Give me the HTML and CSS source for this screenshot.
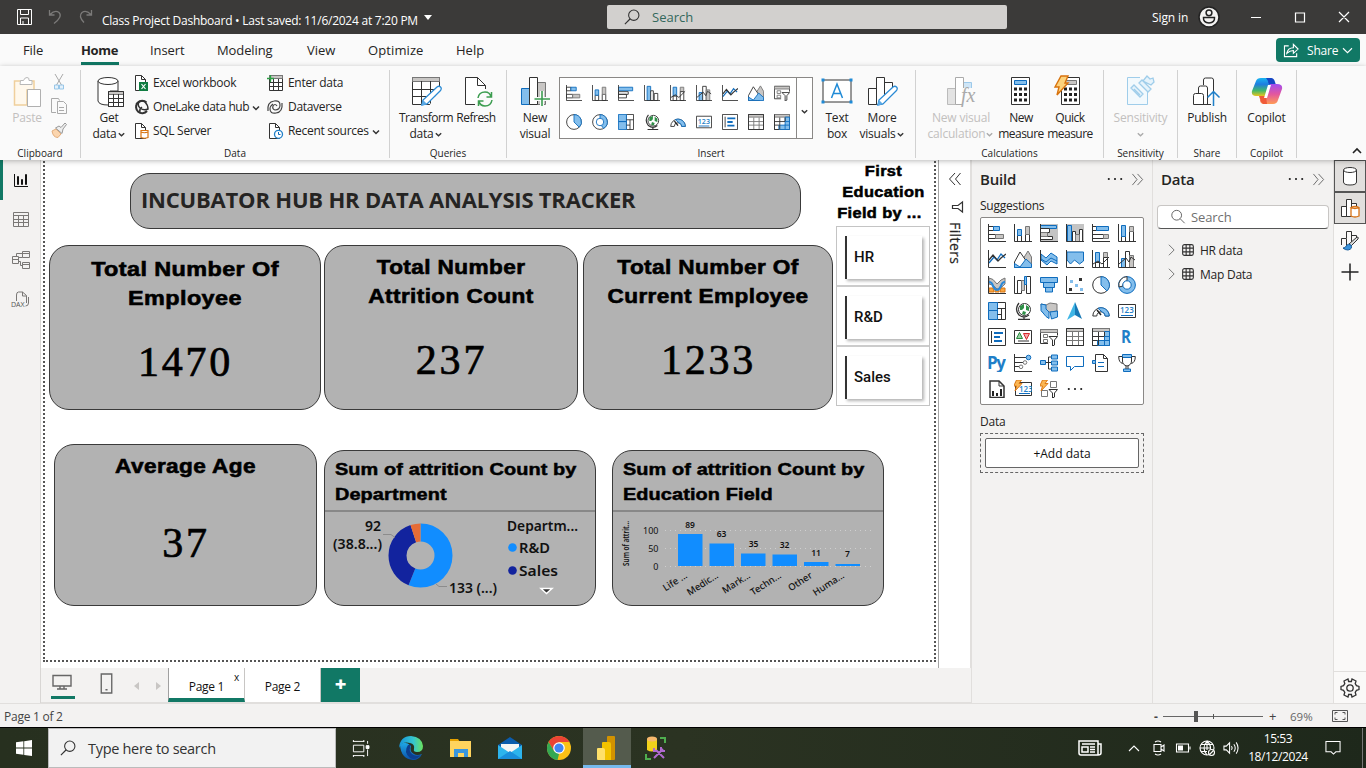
FILE: index.html
```html
<!DOCTYPE html>
<html lang="en">
<head>
<meta charset="utf-8">
<title>Class Project Dashboard</title>
<link rel="stylesheet" href="styles.css">
</head>
<body>
<svg class="defs" aria-hidden="true">
<defs>
<linearGradient id="cpA" x1="0" y1="0" x2="0" y2="1"><stop offset="0" stop-color="#18b5f0"/><stop offset=".35" stop-color="#1f7de0"/><stop offset=".7" stop-color="#42b86a"/><stop offset="1" stop-color="#e8c41c"/></linearGradient>
<linearGradient id="cpB" x1="0" y1="0" x2="0" y2="1"><stop offset="0" stop-color="#a24df0"/><stop offset=".5" stop-color="#e2569f"/><stop offset="1" stop-color="#ff9b54"/></linearGradient>
<linearGradient id="edA" x1="0" y1="0" x2="1" y2="0"><stop offset="0" stop-color="#1593dc"/><stop offset=".6" stop-color="#36c6cf"/><stop offset="1" stop-color="#6be35c"/></linearGradient>
<linearGradient id="edB" x1="0" y1="0" x2="0" y2="1"><stop offset="0" stop-color="#1fa8e6"/><stop offset="1" stop-color="#0b4fa8"/></linearGradient>
<symbol id="sbar" viewBox="0 0 18 18"><path class="w" d="M.5 2.500h5v4h-5zM.5 10.500h7v4h-7z"/><path class="b" d="M5.500 2.500h6v4h-6z"/><path class="g" d="M7.500 10.500h8v4h-8z"/><path class="d" d="M.5 0v17.500H18"/></symbol>
<symbol id="scol" viewBox="0 0 18 18"><path class="w" d="M3.500 11.500h4v6h-4zM11.500 10.500h4v7h-4z"/><path class="b" d="M3.500 5.500h4v6h-4z"/><path class="g" d="M11.500 2.500h4v8h-4z"/><path class="d" d="M.5 0v17.500H18"/></symbol>
<symbol id="cbar" viewBox="0 0 18 18"><path class="b" d="M.5 2.500h16v4h-16z"/><path class="w" d="M.5 7.500h11v3h-11zM.5 10.500h9v4h-9z"/><path class="d" d="M.5 0v17.500H18"/></symbol>
<symbol id="ccol" viewBox="0 0 18 18"><path class="b" d="M3.500 1.500h4v16h-4z"/><path class="w" d="M7.500 6.500h3v11h-3zM11.500 9.500h4v8h-4z"/><path class="d" d="M.5 0v17.500H18"/></symbol>
<symbol id="hbar" viewBox="0 0 18 18"><path class="w" d="M.5 2.500h4v4h-4zM.5 10.500h11v4h-11z"/><path class="b" d="M4.500 2.500h12v4h-12z"/><path class="g" d="M11.500 10.500h5v4h-5z"/><path class="d" d="M.5 0v17.500H18"/></symbol>
<symbol id="hcol" viewBox="0 0 18 18"><path class="w" d="M3.500 12.500h4v5h-4zM11.500 7.500h4v10h-4z"/><path class="b" d="M3.500 1.500h4v11h-4z"/><path class="g" d="M11.500 2.500h4v5h-4z"/><path class="d" d="M.5 0v17.500H18"/></symbol>
<symbol id="cbars" viewBox="0 0 18 18"><path fill="#c4c4c4" d="M0 0h18v18H0z"/><path class="b" d="M.5 1.500h16v3h-16z"/><path class="w" d="M.5 4.500h9v4h-9zM.5 12.500h12v3h-12z"/><path class="g" d="M.5 8.500h7v4h-7z"/><path class="d" d="M.5 0v17.500H18"/></symbol>
<symbol id="ccols" viewBox="0 0 18 18"><path fill="#c4c4c4" d="M0 0h18v18H0z"/><path class="b" d="M1.500 1.500h4v16h-4z"/><path class="w" d="M6.500 7.500h3v10h-3zM13.500 5.500h3v12h-3z"/><path class="g" d="M9.500 10.500h4v7h-4z"/><path class="d" d="M.5 0v17.500H18"/></symbol>
<symbol id="line" viewBox="0 0 18 18"><path class="bl" stroke-width="1.300" d="M1 13l5-6 3 3 4-6 4 4"/><path class="d" stroke-width="1.300" d="M1 10l4-5 5 6 3-3 5-4"/><path class="d" d="M.5 0v17.500H18"/></symbol>
<symbol id="area" viewBox="0 0 18 18"><path class="g" d="M9 9L14 1l3.500 6v10z"/><path class="w" d="M.5 12L6 2l9 13-2 2.500H.5z"/><path class="b" d="M.5 17.500v-4L6 17l6-8 5.500 5v3.500z"/></symbol>
<symbol id="sarea" viewBox="0 0 18 18"><path class="b" d="M1 4l5 4 5-5 6 4v7l-6-3-4 4-6-5z"/><path class="bl" d="M1 9l5 3 5-4 6 3"/><path class="d" d="M.5 0v17.500H18"/></symbol>
<symbol id="sarea2" viewBox="0 0 18 18"><path class="b" d="M1 2h16.500v9l-4 3-5-4-4 4-3.500-4z"/><path class="d" d="M.5 0v17.500H18"/></symbol>
<symbol id="linecol" viewBox="0 0 18 18"><path class="b" d="M3.500 2.500h4v10h-4z"/><path class="g" d="M11.500 2.500h4v5h-4z"/><path class="w" d="M3.500 12.500h4v5h-4zM11.500 7.500h4v10h-4z"/><path class="d" d="M1 14l5-3 4 3 7-7M.5 0v17.500H18"/></symbol>
<symbol id="linecol2" viewBox="0 0 18 18"><path class="b" d="M3.500 8.500h4v9h-4z"/><path class="w" d="M7.500 1.500h4v16h-4z"/><path class="g" d="M11.500 5.500h4v12h-4z"/><path class="d" d="M1 14l7-6 3 4 2-5 4 3M.5 0v17.500H18"/></symbol>
<symbol id="ribbonc" viewBox="0 0 18 18"><path class="g" d="M1 2q4 0 8 6 4-5 8-6v6q-4 5-8 5-4-5-8-5z"/><path fill="#f7a643" stroke="#d87511" d="M1 12h4l1 4H1zM13 12h4v4h-5zM7 13.500h4V16H7z"/><path fill="none" stroke="#2b88d8" stroke-width="2.200" d="M1 6q3 0 4 4 2 4 4 4t4-4q1-4 4-4"/><path class="d" d="M.5 0v17.500H18"/></symbol>
<symbol id="water" viewBox="0 0 18 18"><path class="w" d="M3.500 4.500h4v13h-4zM12.500.500h4v17h-4z"/><path class="g" d="M7.500 4.500h3v10h-3z"/><path class="b" d="M10.500.500h2v8h-2z"/><path class="d" d="M.5 0v17.500H4"/></symbol>
<symbol id="funnel" viewBox="0 0 18 18"><path class="b" d="M.5 1.500h17v5H.5zM3.500 6.500h11v5h-11zM5.500 11.500h7v4.500h-7z"/></symbol>
<symbol id="scatter" viewBox="0 0 18 18"><path fill="#83beec" d="M4 4h3v3H4zM9 8h3v3H9zM14 12h3v3h-3z"/><path fill="#333" d="M13 2h3v3h-3zM3 12h3v3H3z"/><path class="d" d="M.5 0v17.500H18"/></symbol>
<symbol id="pie" viewBox="0 0 18 18"><circle class="w" cx="9" cy="9" r="8.300"/><path class="b" d="M9 .7a8.300 8.300 0 0 1 5.900 14.200L9 9z"/></symbol>
<symbol id="donut" viewBox="0 0 18 18"><circle class="b" cx="9" cy="9" r="8.400"/><path class="w" d="M9 .6A8.400 8.400 0 0 0 1 11l4-1q-.5-4 4-5.300z"/><circle class="bw" cx="9" cy="9" r="4.200"/></symbol>
<symbol id="donut2" viewBox="0 0 18 18"><circle class="w" cx="9" cy="9" r="8.300"/><path class="b" d="M9 .7a8.300 8.300 0 0 1 4 15.500L9 11z"/><circle class="bw" cx="9" cy="9" r="4.200"/></symbol>
<symbol id="tree" viewBox="0 0 18 18"><path class="w" d="M9.500.5h8v17h-8z"/><path class="b" d="M.5.500h9v8h-9zM.5 8.500h9v9h-9z"/><path class="d" d="M9.500 6.500h8M13.500 6.500v11M9.500 12.500h4"/></symbol>
<symbol id="globe" viewBox="0 0 18 18"><circle fill="#fff" stroke="#333" cx="10.500" cy="7.500" r="6"/><path fill="#2f8f47" d="M6 4l4-2v4l-2 2H6zM12 3l3 2v4l-3-1zM9 9l3 1-1 3-3-1z"/><path fill="none" stroke="#333" stroke-width="1.300" d="M5 1Q0 7 5 13q5 4 10 0M10 15v2.500M4 17.500h12"/></symbol>
<symbol id="fmap" viewBox="0 0 18 18"><path class="g" d="M1 2l5 1 4-2 7 1v7l-7 1-4-1-4 1z"/><path class="b" d="M1 2l5 1v4l3 3v6.500l-3-2-5-6zM10 10l7.500-1v6l-6 2z"/></symbol>
<symbol id="arrow" viewBox="0 0 18 18"><path fill="#3fb5e5" d="M9 0L1 18l8-5z"/><path fill="#1778b5" d="M9 0l7 17-7-4z"/></symbol>
<symbol id="gauge" viewBox="0 0 18 18"><path class="w" d="M.8 14a8.200 8.200 0 0 1 16.400 0h-4a4.200 4.200 0 0 0-8.400 0z"/><path class="b" d="M6 6.300A8.200 8.200 0 0 1 17.200 14h-4q0-3-3-4z"/><path stroke="#222" stroke-width="1.500" d="M9 13l-4-5"/></symbol>
<symbol id="card" viewBox="0 0 18 18"><path class="w" d="M.5 2.500h17v13H.5z"/><text class="num" x="2" y="11">123</text><path class="bl" d="M3 13.500h12"/></symbol>
<symbol id="mcard" viewBox="0 0 18 18"><path class="w" d="M.5.500h17v17H.5z"/><path class="d" d="M3.500 3v12"/><path stroke="#0f6cbd" stroke-width="2" d="M6 5h9M6 9h6M6 13h8"/></symbol>
<symbol id="kpi" viewBox="0 0 18 18"><path class="w" d="M.5 2.500h17v13H.5z"/><path fill="#9bd0a4" stroke="#29893f" d="M2.500 10.500l3-6 3 6z"/><path fill="#f4a6a6" stroke="#d4282c" d="M9.500 5.500h6l-3 6z"/><path class="d" d="M4 13h11"/></symbol>
<symbol id="slicer" viewBox="0 0 18 18"><path class="d" d="M8 15.500H.5v-14h17v6"/><path class="g" d="M.5 1.500h17v3H.5z"/><path class="gw" d="M3.500 6.500h4v3h-4zM3.500 11.500h4v3h-4z"/><path class="w" d="M9 8.500h8.500L14.500 12v5l-2 1v-6z"/></symbol>
<symbol id="table" viewBox="0 0 18 18"><path class="w" d="M.5.500h17v17H.5z"/><path class="g" d="M.5.500h17v3H.5z"/><path class="gw" d="M6.500 4v13M12.500 4v13M1 8.500h16M1 12.500h16"/><path class="d" d="M.5.500h17v17H.5z"/></symbol>
<symbol id="matrix" viewBox="0 0 18 18"><path class="w" d="M.5.500h17v17H.5z"/><path class="g" d="M.5.500h17v3H.5z"/><path class="b" d="M12.500 3.500h5v14h-12v-5h7z"/><path class="d" d="M.5 8.500h12M.5 12.500h5M6.500 4v13M12.500 4v4M.5.500v17h5"/><path class="bl" d="M12.500 8.500h5M12.500 12.500h5M12.500 12v5"/></symbol>
<symbol id="r" viewBox="0 0 18 18"><text class="big" x="3" y="15" textLength="10" lengthAdjust="spacingAndGlyphs">R</text></symbol>
<symbol id="py" viewBox="0 0 18 18"><text class="big" x="-1" y="15" textLength="19">Py</text></symbol>
<symbol id="keyinf" viewBox="0 0 18 18"><path class="d" d="M.5 0v17.500H18M1 3.500h11M1 8.500h8M1 12.500h4"/><circle class="b" cx="14.500" cy="3.500" r="2.300"/><circle class="gw" cx="11" cy="8.500" r="1.800"/><circle class="gw" cx="7" cy="12.800" r="1.800"/></symbol>
<symbol id="decomp" viewBox="0 0 18 18"><path class="d" d="M5 8.500h7M8.500 3v12M8.500 3h3M8.500 15h3"/><path class="b" d="M.5 6.500h5v4h-5zM11.500 1h6v4h-6zM11.500 7h6v4h-6zM11.500 13h6v4h-6z"/></symbol>
<symbol id="qa" viewBox="0 0 18 18"><path class="bw" d="M.5 2.500h17v10h-9l-4 4v-4h-4z"/></symbol>
<symbol id="narr" viewBox="0 0 18 18"><path class="w" d="M3.500.500h8l4 4v13h-12z"/><path class="d" d="M11.500.500v4h4"/><path class="b" d="M.5 6.500h3v3h-3z"/><path class="bl" d="M6 8.500h6M6 12.500h6"/></symbol>
<symbol id="cup" viewBox="0 0 18 18"><path class="b" d="M4.500.500h9v3h-9zM5.500 15h7v2.500h-7z"/><path class="d" d="M4.500 3v4q0 4 4.500 5 4.500-1 4.500-5V3M4 2.500H.7q0 6 4 7M14 2.500h3.300q0 6-4 7M8 12v3M10 12v3"/></symbol>
<symbol id="pag" viewBox="0 0 18 18"><path fill="#fff" stroke="#333" stroke-width="1.500" d="M2 1h9l5 5v11.500H2z"/><path class="d" d="M11 1v5h5"/><path fill="#222" d="M4 11h2v5H4zM8 13h2v3H8zM12 9h2v7h-2z"/></symbol>
<symbol id="bolt" viewBox="0 0 10 12"><path fill="#fbb653" stroke="#d8720c" stroke-width=".9" d="M3.500.500h5L6 4h3L2 11.500l1.500-5H.7z"/></symbol>
<symbol id="app1" viewBox="0 0 18 18"><path class="w" d="M1.500 2.500h16v13h-16z"/><text class="num" x="5" y="12">123</text><path class="bl" d="M5 13.500h11"/><use href="#bolt" x="-1" y="-.5" width="10" height="12"/></symbol>
<symbol id="app2" viewBox="0 0 18 18"><path class="gw" d="M1.500 10.500h6v6h-6zM10.500 1.500h6v6h-6z"/><path class="w" d="M9 9.500h8.500l-3 3.500v4l-2 1v-5z"/><use href="#bolt" x="-1" y="-.5" width="10" height="12"/></symbol>
<symbol id="dots" viewBox="0 0 18 18"><path fill="#333" d="M1 8h2v2H1zM8 8h2v2H8zM15 8h2v2h-2z"/></symbol>
<symbol id="chev" viewBox="0 0 10 10"><path fill="none" stroke="currentColor" stroke-width="1.500" d="M2 3.500L5 6.500l3-3"/></symbol>
<symbol id="dbl" viewBox="0 0 14 14"><path fill="none" stroke="currentColor" d="M1.500 1l5 6-5 6M7 1l5.500 6L7 13"/></symbol>
<symbol id="pencil" viewBox="0 0 22 22"><path fill="#fff" stroke="#2a8ad4" stroke-width="1.300" d="M2 20l1-5L17 2q2-1.500 3.500 0t0 3.500L7 19z"/><path fill="#5aa9e6" d="M1 21l2-6 4 4z"/></symbol>
<symbol id="bars3" viewBox="0 0 30 30"><path class="w" d="M1.500 12.500h8v16h-8zM17.500 6.500h8v22h-8zM9.500 1.500h8v27h-8z"/></symbol>
<symbol id="search" viewBox="0 0 18 18"><circle cx="11" cy="7" r="5.800" fill="none" stroke="currentColor" stroke-width="1.200"/><path stroke="currentColor" stroke-width="1.300" d="M7 11L1 17"/></symbol>
</defs>
</svg>

<header class="titlebar">
  <svg class="save" viewBox="0 0 18 18"><path d="M1.500 1.500h14v15h-14zM4.500 1.500v5h8v-5M4.500 16v-6h8v6M7 16v-3"/></svg>
  <svg class="undo" viewBox="0 0 16 16"><path d="M1.500 1v5h5M2 5.500q5-5 9-2 4 4-5 11"/></svg>
  <svg class="undo redo" viewBox="0 0 16 16"><path d="M14.500 1v5h-5M14 5.500q-5-5-9-2-4 4 2 10"/></svg>
  <span class="doc">Class Project Dashboard • Last saved: 11/6/2024 at 7:20 PM</span>
  <i class="caret"></i>
  <div class="tsearch"><svg><use href="#search"/></svg><span>Search</span></div>
  <span class="signin">Sign in</span>
  <svg class="avatar" viewBox="0 0 20 20"><circle cx="10" cy="10" r="10" fill="#f3f2f1"/><circle cx="10" cy="5.800" r="2.900"/><path d="M4.500 10.500h11q.5 5-5.500 5.500-6-.5-5.500-5.500z"/></svg>
  <svg class="win" viewBox="0 0 100 12"><path d="M1 6.500h10M45.500 2h9v9h-9zM89 1l10 10M99 1L89 11"/></svg>
</header>

<nav class="menu">
  <span class="m1">File</span><span class="m2 on">Home</span><span class="m3">Insert</span><span class="m4">Modeling</span><span class="m5">View</span><span class="m6">Optimize</span><span class="m7">Help</span>
  <button class="share"><svg viewBox="0 0 18 16"><path d="M6 3H1.500v11.500h13V11M4 11q1-6 7-6V1.500l5 5-5 4.500V8q-4 0-7 3z"/></svg><span>Share</span><svg class="sc" viewBox="0 0 10 10"><path d="M0 2.500l5 5 5-5"/></svg></button>
</nav>

<section class="ribbon">
  <div class="group gClip"><div class="tools">
    <div class="big off"><svg viewBox="0 0 30 30"><path fill="#fff8ec" stroke="#f0cf9c" stroke-width="1.500" d="M9 5H2.500v24H15V14h7V5h-4"/><path fill="#fff" stroke="#b8b8b8" d="M8.500 4.500h3q1-3 3.500-3t2 3h3v4h-12z"/><path fill="#fff" stroke="#b0b0b0" d="M15.500 13.500h13v17h-13z"/></svg><b>Paste</b></div>
    <div class="stack mini"><svg viewBox="0 0 16 16"><path fill="none" stroke="#aaa" d="M4 0l6.500 11M12 0L5.500 11"/><path fill="#e4f1fb" stroke="#97c6e8" d="M3.500 11h4v4h-4zM8.500 11h4v4h-4z"/></svg><svg viewBox="0 0 16 16"><path fill="#fafafa" stroke="#aaa" d="M5 14.500H.5V.5h7l1 2M6.500 3.500h6l3 3v9h-9zM8 9.500h5M8 12.500h5"/></svg><svg viewBox="0 0 16 16"><path fill="#fbd5ae" stroke="#e3ad7c" d="M1 9l4-2 5 5-3 3.500q-5 0-6-6.500z"/><path fill="#eee" stroke="#999" d="M4.500 6L8 4l2 1.500L14 1l1.500 1.500L12 7l-1 4.500z"/></svg></div>
  </div><p>Clipboard</p></div>

  <div class="group gData"><div class="tools">
    <div class="big getd"><svg viewBox="0 0 30 30"><path class="w" d="M4 5v20q1 4 10 4h2V15h8V5"/><ellipse class="w" cx="14" cy="5" rx="10" ry="3.500"/><path class="w" d="M14.500 15.500h15v15h-15z"/><path class="g" d="M14.500 15.500h15v3h-15z"/><path class="d" d="M14.500 22.500h15M14.500 26.500h15M19.500 18v12M24.500 18v12M14.500 15.500h15v15h-15z"/></svg><b>Get</b><b>data<svg class="cv"><use href="#chev"/></svg></b></div>
    <div class="stack c1">
      <span><svg viewBox="0 0 16 16"><path class="w" d="M1.500.500h6l4 4v11h-10z"/><path class="d" d="M7.500.500v4h4"/><path fill="#107c41" d="M5 7h9v9H5z"/><path stroke="#fff" stroke-width="1.200" d="M7.500 9l4 5M11.500 9l-4 5"/></svg>Excel workbook</span>
      <span class="lake"><svg viewBox="0 0 16 16"><path fill="none" stroke="#333" stroke-width="2" d="M12.500 3.500A6.200 6.200 0 1 0 13 12"/><path fill="none" stroke="#333" stroke-width="1.500" d="M2 5q5-5 9-2 3 3 3 7-4 2-8-1-3-3-1-6M6 13q-1-3 2-5"/></svg>OneLake data hub<svg class="cv lg"><use href="#chev"/></svg></span>
      <span><svg viewBox="0 0 16 16"><path class="w" d="M1.500.500h6l4 4v11h-10z"/><path class="d" d="M7.500.500v4h4"/><path fill="#fff" stroke="#d9730d" stroke-width="1.200" d="M7 7.500h7v7q-3.500 1.500-7 0zM7 9q3.500 1.500 7 0"/></svg>SQL Server</span>
    </div>
    <div class="stack c2">
      <span><svg viewBox="0 0 16 16"><path class="w" d="M2.500.500h13v15h-13z"/><path class="g" d="M2.500.500h13v3h-13z"/><path class="d" d="M2 7.500h13.500M2 11.500h13.500M6.500 4v11.500M11.500 4v11.500"/><path stroke="#2c9f45" stroke-width="1.300" d="M3.500 0v7M0 3.500h7"/></svg>Enter data</span>
      <span><svg viewBox="0 0 16 16"><path fill="none" stroke="#444" stroke-width="1.200" d="M1 12q-1-9 6-10 6-1 6 4 0 5-5 5-3-1-2-4 2-3 4 0M15 4q1 9-6 10-6 1-6-4 0-3 3-5"/></svg>Dataverse</span>
      <span class="rec"><svg viewBox="0 0 16 16"><path class="w" d="M2.500.500h6l4 4v11h-10z"/><path class="d" d="M8.500.500v4h4"/><circle fill="#fff" stroke="#1f7fc8" stroke-width="1.300" cx="11.500" cy="11.300" r="4"/><path class="bl" d="M11.500 9v2.500h2"/></svg>Recent sources<svg class="cv lg"><use href="#chev"/></svg></span>
    </div>
  </div><p>Data</p></div>

  <div class="group gQuery"><div class="tools">
    <div class="big wT"><svg viewBox="0 0 30 30"><path class="w" d="M1.500 1.500h27v27h-27z"/><path class="g" d="M1.500 1.500h27v4h-27z"/><path class="d" d="M1.500 13.500h27M1.500 20.500h27M10.500 5v23M19.500 5v23"/><path fill="#fafafa" d="M18 30h12V11z"/><use href="#pencil" x="9" y="9" width="22" height="22"/></svg><b>Transform</b><b>data<svg class="cv"><use href="#chev"/></svg></b></div>
    <div class="big wR"><svg viewBox="0 0 30 30"><path class="w" d="M14 28.500H4.500v-27h12l8 8V13"/><path class="d" d="M16.500 1.500v8h8"/><path fill="none" stroke="#3c9d50" stroke-width="1.500" d="M17 22q1-6 7-6 5 0 6 5M30.500 16v5h-5M31 24q-1 6-7 6-5 0-6-5M17.500 30v-5h5"/></svg><b>Refresh</b></div>
  </div><p>Queries</p></div>

  <div class="group gInsert"><div class="tools">
    <div class="big wN"><svg viewBox="0 0 30 30"><path class="b" d="M1.500 12.500h8v16h-8z"/><path fill="#c8c6c4" stroke="#777" d="M17.500 6.500h8v22h-8z"/><path class="w" d="M9.500 1.500h8v27h-8z"/><path stroke="#fafafa" stroke-width="4" d="M22 15v16M14 23h16"/><path stroke="#3c9d50" stroke-width="1.600" d="M22 15v15M14.500 23H30"/></svg><b>New</b><b>visual</b></div>
    <div class="gallery"><div class="gal">
      <svg><use href="#sbar"/></svg><svg><use href="#scol"/></svg><svg><use href="#cbar"/></svg><svg><use href="#ccol"/></svg><svg><use href="#linecol"/></svg><svg><use href="#linecol2"/></svg><svg><use href="#line"/></svg><svg><use href="#area"/></svg><svg><use href="#slicer"/></svg>
      <svg><use href="#pie"/></svg><svg><use href="#donut2"/></svg><svg><use href="#tree"/></svg><svg><use href="#globe"/></svg><svg><use href="#gauge"/></svg><svg><use href="#card"/></svg><svg><use href="#mcard"/></svg><svg><use href="#table"/></svg><svg><use href="#matrix"/></svg>
    </div><div class="more"><svg class="cv"><use href="#chev"/></svg></div></div>
    <div class="big wB"><svg viewBox="0 0 30 30"><path class="w" d="M1 4h28v22H1z"/><path fill="#1f8ad6" d="M-.5 2.500h3v3h-3zM27.500 2.500h3v3h-3zM-.5 24.500h3v3h-3zM27.500 24.500h3v3h-3z"/><path fill="none" stroke="#1f8ad6" stroke-width="1.500" d="M9.500 22L15 8l5.500 14M11.500 17.500h7"/></svg><b>Text</b><b>box</b></div>
    <div class="big wM"><svg viewBox="0 0 30 30"><use href="#bars3"/><path fill="#fafafa" d="M14 30h14V12z"/><use href="#pencil" x="9" y="9" width="22" height="22"/></svg><b>More</b><b>visuals<svg class="cv"><use href="#chev"/></svg></b></div>
  </div><p>Insert</p></div>

  <div class="group gCalc"><div class="tools">
    <div class="big off wV"><svg viewBox="0 0 30 30"><path fill="#e3e3e3" stroke="#bbb" d="M1.500 12.500h8v16h-8z"/><path fill="#cfe6f7" stroke="#9cc9ea" d="M17.500 6.500h8v6h-8z"/><path fill="#fff" stroke="#aaa" d="M9.500 1.500h8v27h-8z"/><path fill="#fafafa" d="M16 12h14v18H16z"/><text class="fx" x="15" y="26">fx</text></svg><b>New visual</b><b>calculation<svg class="cv"><use href="#chev"/></svg></b></div>
    <div class="big wE"><svg viewBox="0 0 30 30"><path class="w" d="M5.500 1.500h18v27h-18z"/><path class="b" d="M8.500 4.500h12v4h-12z"/><path stroke="#222" stroke-width="3" stroke-dasharray="3 2" d="M8 13h13M8 18.500h13M8 24h13"/></svg><b>New</b><b>measure</b></div>
    <div class="big wQ"><svg viewBox="0 0 30 30"><path class="w" d="M6.500 1.500h18v27h-18z"/><path class="g" d="M9.500 4.500h12v4h-12z"/><path stroke="#222" stroke-width="3" stroke-dasharray="3 2" d="M9 13h13M9 18.500h13M9 24h13"/><path fill="#fcd27c" stroke="#d8720c" stroke-width="1.400" d="M6 0h7l-3 7h3L2 19l2-8H0z"/></svg><b>Quick</b><b>measure</b></div>
  </div><p>Calculations</p></div>

  <div class="group gSens"><div class="tools"><div class="big off"><svg viewBox="0 0 30 30"><path fill="#f2f9fd" stroke="#9fcdea" d="M15 1.500H2.500v27h20V15"/><path fill="#e6f3fb" stroke="#9fcdea" stroke-width="1.300" d="M6 12l3-3 9 9-3 3zM9 13l6 6M14 7l3-3 9 9-3 3zM18 5l4-5 3 3 3-1 1 4-3 3z"/></svg><b>Sensitivity</b><b><svg class="cv"><use href="#chev"/></svg></b></div></div><p>Sensitivity</p></div>
  <div class="group gShare"><div class="tools"><div class="big"><svg viewBox="0 0 30 30"><path class="w" d="M11.500 9V4q0-2 2-2h6q2 0 2 2v24M6.500 17v-5q0-2 2-2h5q2 0 2 2v16M1.500 28.500v-9q0-2 2-2h6q2 0 2 2v9zM11 28.500h8"/><path fill="none" stroke="#1f7fc8" stroke-width="1.500" d="M21.500 30V16M15.500 21.500l6-6 6 6"/></svg><b>Publish</b></div></div><p>Share</p></div>
  <div class="group gCop"><div class="tools"><div class="big"><svg viewBox="0 0 30 30"><path fill="url(#cpA)" d="M9 2h9q3 0 4 4l1 3h-5l-4 11H4q-5 0-4-5L4 5q1-3 5-3z"/><path fill="#1646c4" d="M14 2h5q3 0 4 4l1 3h-4q-4 0-4-4z"/><path fill="url(#cpB)" d="M21 28h-9q-4 0-4-4l5-4 5-12h7q6 0 5 5l-4 11q-1 4-5 4z"/><path fill="#f05a38" d="M15 28h-4q-2-1-3-5l-1-3h7z"/><path fill="#fff" d="M16 9h3l-4 13h-3z"/></svg><b>Copilot</b></div></div><p>Copilot</p></div>
  <svg class="collapse" viewBox="0 0 10 10"><path d="M1 7l4-4 4 4"/></svg>
</section>

<main class="work">
  <aside class="rail">
    <svg class="act" viewBox="0 0 18 18"><path d="M2.500 3v12.500H16M5.500 5.500h1v8h-1zM9.500 8.500h1v5h-1zM13.500 3.500h1v10h-1z"/></svg>
    <svg viewBox="0 0 18 18"><path d="M1.500 1.500h15v14h-15zM1.500 4.500h15M1.500 8.500h15M1.500 11.500h15M6.500 4.500v11M11.500 4.500v11"/></svg>
    <svg viewBox="0 0 18 18"><path d="M.5 5.500h6v7h-6zM.5 8.500h6M10.500.500h7v6h-7zM10.500 2.500h7M10.500 11.500h7v6h-7zM10.500 13.500h7M4.500 5V2.500h6M6.500 10.500h2v4h2M6.500 6.500h4"/></svg>
    <svg viewBox="0 0 18 18"><path d="M4.500 10V4q0-3 2-3h4l4 3.500V12M10.500 1v4h4M16.500 6v6q0 3-3 3"/><text x="0" y="16">DAX</text></svg>
  </aside>

  <div class="center">
    <div class="upper">
      <div class="canvas">
        <div class="page"></div>
        <h1 class="card title"><span>INCUBATOR HUB HR DATA ANALYSIS TRACKER</span></h1>
        <div class="card k1"><h2>Total Number Of<br>Employee</h2><strong>1470</strong></div>
        <div class="card k2"><h2>Total Number<br>Attrition Count</h2><strong>237</strong></div>
        <div class="card k3"><h2>Total Number Of<br>Current Employee</h2><strong>1233</strong></div>
        <div class="slicer">
          <h3>First<br>Education<br><span>Field by ...</span></h3>
          <ul><li><span>HR</span></li><li><span>R&amp;D</span></li><li><span>Sales</span></li></ul>
        </div>
        <div class="card k4"><h2>Average Age</h2><strong>37</strong></div>
        <div class="card chart v1"><h4>Sum of attrition Count by<br>Department</h4>
          <svg viewBox="0 0 270 94">
            <g fill="none" stroke-width="18" transform="rotate(-90 95.500 43.500)"><circle cx="95.500" cy="43.500" r="23" stroke="#118dff" pathLength="100" stroke-dasharray="56.100 43.900"/><circle cx="95.500" cy="43.500" r="23" stroke="#12239e" pathLength="100" stroke-dasharray="38.800 61.200" stroke-dashoffset="-56.100"/><circle cx="95.500" cy="43.500" r="23" stroke="#e66c37" pathLength="100" stroke-dasharray="5.100 94.900" stroke-dashoffset="-94.900"/></g>
            <path fill="none" stroke="#8c8c8c" d="M58 22.500h8l4 3M111 72l3 2.500h8"/>
            <g class="lb"><text x="40" y="19" textLength="16" lengthAdjust="spacingAndGlyphs">92</text><text x="8" y="37" textLength="49" lengthAdjust="spacingAndGlyphs">(38.8...)</text><text x="124" y="81" textLength="48" lengthAdjust="spacingAndGlyphs">133 (...)</text></g>
            <g class="lg"><text x="182" y="19" textLength="71" lengthAdjust="spacingAndGlyphs">Departm...</text><text x="194" y="41" textLength="31" lengthAdjust="spacingAndGlyphs">R&amp;D</text><text x="194" y="64" textLength="39" lengthAdjust="spacingAndGlyphs">Sales</text></g>
            <circle cx="187.500" cy="35.500" r="4.300" fill="#118dff"/><circle cx="187.500" cy="58.500" r="4.300" fill="#12239e"/>
            <path fill="#333" stroke="#fff" stroke-width="1.500" d="M216 76.500h11l-5.500 5z"/>
          </svg></div>
        <div class="card chart v2"><h4>Sum of attrition Count by<br>Education Field</h4>
          <svg viewBox="0 0 270 94">
            <path stroke="#cfcfcf" stroke-dasharray="1 4" d="M52 18.500h207M52 36.500h207M52 54.500h207"/>
            <path fill="#118dff" d="M65 22h24.500v32H65zM96.500 31.500H121v22.500H96.500zM128 41.500h24.500V54H128zM159.500 42.500H184V54h-24.500zM191 50h24.500v4H191zM222.500 52H247v2h-24.500z"/>
            <g class="ax"><text x="45.500" y="21.500">100</text><text x="45.500" y="39.500">50</text><text x="45.500" y="57.500">0</text></g>
            <g class="vl"><text x="77" y="16">89</text><text x="108.500" y="25">63</text><text x="140.500" y="35">35</text><text x="171.500" y="36">32</text><text x="203" y="44">11</text><text x="234.500" y="45">7</text></g>
            <g class="cl"><text transform="translate(75 65) rotate(-33)">Life ...</text><text transform="translate(106 65) rotate(-33)">Medic...</text><text transform="translate(138 65) rotate(-33)">Mark...</text><text transform="translate(169 65) rotate(-33)">Techn...</text><text transform="translate(200 65) rotate(-33)">Other</text><text transform="translate(232 65) rotate(-33)">Huma...</text></g>
            <text class="yl" transform="translate(16 54) rotate(-90)" textLength="45" lengthAdjust="spacingAndGlyphs">Sum of attrit...</text>
          </svg></div>
      </div>
      <aside class="filters"><svg class="dl"><use href="#dbl"/></svg><svg class="fn" viewBox="0 0 12 12"><path d="M11.500 1v10L7 7.500H1.500v-3H7z"/></svg><span>Filters</span></aside>
    </div>
    <div class="pages">
      <svg class="desk" viewBox="0 0 20 16"><path d="M1 1.500h18v10.500H1zM8 12v3M12 12v3M5 15h10"/></svg>
      <svg class="phone" viewBox="0 0 12 20"><path d="M1 1h10v18H1zM5 16h2"/></svg>
      <i class="pl"></i><i class="pr"></i>
      <span class="tab cur">Page 1<em>x</em></span><span class="tab">Page 2</span><span class="add">+</span>
    </div>
  </div>

  <section class="pane build">
    <header><h5>Build</h5><svg class="dt"><use href="#dots"/></svg><svg class="dd"><use href="#dbl"/></svg></header>
    <label>Suggestions</label>
    <div class="vis">
      <svg><use href="#sbar"/></svg><svg><use href="#scol"/></svg><svg><use href="#cbars"/></svg><svg><use href="#ccols"/></svg><svg><use href="#hbar"/></svg><svg><use href="#hcol"/></svg>
      <svg><use href="#line"/></svg><svg><use href="#area"/></svg><svg><use href="#sarea"/></svg><svg><use href="#sarea2"/></svg><svg><use href="#linecol"/></svg><svg><use href="#linecol2"/></svg>
      <svg><use href="#ribbonc"/></svg><svg><use href="#water"/></svg><svg><use href="#funnel"/></svg><svg><use href="#scatter"/></svg><svg><use href="#pie"/></svg><svg><use href="#donut"/></svg>
      <svg><use href="#tree"/></svg><svg><use href="#globe"/></svg><svg><use href="#fmap"/></svg><svg><use href="#arrow"/></svg><svg><use href="#gauge"/></svg><svg><use href="#card"/></svg>
      <svg><use href="#mcard"/></svg><svg><use href="#kpi"/></svg><svg><use href="#slicer"/></svg><svg><use href="#table"/></svg><svg><use href="#matrix"/></svg><svg><use href="#r"/></svg>
      <svg><use href="#py"/></svg><svg><use href="#keyinf"/></svg><svg><use href="#decomp"/></svg><svg><use href="#qa"/></svg><svg><use href="#narr"/></svg><svg><use href="#cup"/></svg>
      <svg><use href="#pag"/></svg><svg><use href="#app1"/></svg><svg><use href="#app2"/></svg><svg class="sm"><use href="#dots"/></svg>
    </div>
    <label class="dlab">Data</label>
    <div class="drop"><button>+Add data</button></div>
  </section>

  <section class="pane data">
    <header><h5>Data</h5><svg class="dt"><use href="#dots"/></svg><svg class="dd"><use href="#dbl"/></svg></header>
    <div class="dsearch"><svg viewBox="0 0 18 18"><circle cx="7.500" cy="7" r="5.500"/><path d="M11.500 11l5 5"/></svg><span>Search</span></div>
    <div class="row"><svg class="ch" viewBox="0 0 8 12"><path d="M1 0l6 6-6 6"/></svg><svg class="tb" viewBox="0 0 13 13"><rect x=".7" y=".7" width="11.600" height="11.600" rx="2"/><path d="M1 4.500h11M1 8.500h11M4.500 1v11M8.500 1v11"/></svg><span>HR data</span></div>
    <div class="row"><svg class="ch" viewBox="0 0 8 12"><path d="M1 0l6 6-6 6"/></svg><svg class="tb" viewBox="0 0 13 13"><rect x=".7" y=".7" width="11.600" height="11.600" rx="2"/><path d="M1 4.500h11M1 8.500h11M4.500 1v11M8.500 1v11"/></svg><span>Map Data</span></div>
  </section>

  <aside class="rrail">
    <div class="sel"><svg viewBox="0 0 20 20"><path class="w" d="M3.500 4v12q0 3 6.500 3t6.500-3V4"/><ellipse class="w" cx="10" cy="4" rx="6.500" ry="2.500"/></svg></div>
    <div class="sel"><svg viewBox="0 0 20 20"><path class="w" d="M1.500 8.500h5v10h-5zM6.500 1.500h5v17h-5zM11.500 5.500h5v5h-5z"/><path fill="#fff" stroke="#d87316" stroke-width="1.300" d="M11 9.500v8.500q4 2 8 0V9.500q-4-2-8 0 4 2 8 0"/></svg></div>
    <div><svg viewBox="0 0 20 20"><path class="d" d="M1.500 15V8.500h5v10h-3M6.500 8V1.500h5V12M11.500 5.500h5v3"/><path fill="#ddd" stroke="#333" d="M9 14l8-7q2 0 1 2l-7 7z"/><path fill="#3a93dc" stroke="#1c5f9c" d="M3 18q3 0 3-2 2-3 5-1 2 4-3 5-3 0-5-2z"/></svg></div>
    <div class="plus"><svg viewBox="0 0 20 20"><path d="M10 1.500v17M1.500 10h17"/></svg></div>
    <div class="gear"><svg viewBox="0 0 20 20"><circle cx="10" cy="10" r="3.200"/><path d="M8 1l.6 2.500h2.800L12 1l4 2-.8 2.700 1.300 2 2.500.8v3l-2.500.8-1.300 2L16 17l-4 2-.6-2.500H8.600L8 19l-4-2 .8-2.700-1.300-2L1 11.500v-3l2.500-.8 1.300-2L4 3z"/></svg></div>
  </aside>
</main>

<footer class="status"><span class="pn">Page 1 of 2</span><span class="minus">-</span><div class="track"><i class="thumb"></i><i class="tick"></i></div><span class="pls">+</span><span class="pct">69%</span><svg viewBox="0 0 16 12"><path d="M.5.500h15v11H.5zM3 4.500v-2h2.500M10.500 2.500H13v2M3 7.500v2h2.500M10.500 9.500H13v-2"/></svg></footer>

<footer class="taskbar">
  <div class="start"><svg viewBox="0 0 16 16"><path fill="#fff" d="M0 2.300l7.400-1v6.300H0zM8.200 1.200L16 0v7.600H8.200zM0 8.400h7.400v6.400L0 13.700zM8.200 8.400H16V16l-7.800-1.100z"/></svg></div>
  <div class="wsearch"><svg><use href="#search"/></svg><span>Type here to search</span></div>
  <div class="app"><svg class="tv" viewBox="0 0 18 18"><path d="M1 1.500h12M1 16.500h12M1.500 5.500h11v7h-11zM1.500 0v2M12.500 0v2M1.500 16v2M12.500 16v2M16.500 1v3M16.500 10v7"/><path fill="#fff" d="M15 6h3v3h-3z"/></svg></div>
  <div class="app a2"><svg viewBox="0 0 24 24"><path fill="url(#edB)" d="M1 9q1 14 13 15 6 0 9-6-5 2-8 0-5-3-3-8Q6 4 1 9z"/><path fill="url(#edA)" d="M0 12Q1 0 12 0q11 1 12 10 0 6-6 6-4 0-3-3 1-5-4-6Q3 5 0 12z"/><path fill="#0c3f8f" d="M9 9q-5 7 2 13 6 3 11-3-6 2-9-1-4-4-1-9z"/></svg></div>
  <div class="app"><svg viewBox="0 0 24 24"><path fill="#e6a100" d="M1 3h8l2 3H1z"/><path fill="#ffd45e" d="M1 5h21v16H1z"/><path fill="#3a96dd" d="M5 13h14v8h-4v-4H9v4H5z"/></svg></div>
  <div class="app"><svg viewBox="0 0 24 24"><path fill="#0b5cad" d="M0 9l12-8 12 8v6H0z"/><path fill="#f5f5f5" d="M3 8h18v4l-9 6-9-6z"/><path fill="#2db4ec" d="M0 9l12 8 12-8v14H0z"/><path fill="#1a8fdb" d="M0 23l12-8 12 8z"/></svg></div>
  <div class="app"><svg viewBox="0 0 24 24"><circle cx="12" cy="12" r="12" fill="#fbc116"/><path fill="#ea4335" d="M1.600 6A12 12 0 0 1 22.400 6H12L6.800 15z"/><path fill="#34a853" d="M1.600 6L7 15l5 3-1.500 6A12 12 0 0 1 1.600 6z"/><circle cx="12" cy="12" r="5.800" fill="#fff"/><circle cx="12" cy="12" r="4.600" fill="#4285f4"/></svg></div>
  <div class="app pbi"><svg viewBox="0 0 24 24"><path fill="#d29200" d="M12 1q0-1 1-1h6q1 0 1 1v22q0 1-1 1h-7z"/><path fill="#f2c200" d="M7 7q0-1 1-1h6q2 0 2 2v16H7z"/><path fill="#ffe06a" d="M2 13q0-1 1-1h5q2 0 2 2v10H3q-1 0-1-1z"/></svg></div>
  <div class="app"><svg viewBox="0 0 24 24"><path fill="#f2d21b" d="M3 3q5-3 10 0v11q-5 3-10 0z"/><ellipse cx="8" cy="3" rx="5" ry="2.500" fill="#f7b96e"/><path fill="none" stroke="#4fae4f" stroke-width="2" d="M16 2h5v5M7 23H2v-5"/><path fill="none" stroke="#b06ad0" stroke-width="2" d="M10 22l9-9M12 14l8 8M10 12v3h3M17 11v4h4"/></svg></div>
  <div class="tray">
    <svg class="t1" viewBox="0 0 24 16"><path d="M1 1h19v14H3q-2 0-2-2zM20 4h3v9q0 2-3 2M4 4h13M4 7h6v5H4zM12 7h5M12 9.500h5M12 12h5" stroke-width="1.500"/></svg>
    <svg class="t2" viewBox="0 0 12 8"><path d="M1 7l5-5 5 5"/></svg>
    <svg class="t3" viewBox="0 0 12 16"><path d="M1 4.500h7v7H1zM8 7l3-2v6L8 9M2 2q3-2 6 0M2 14q3 2 6 0"/></svg>
    <svg class="t4" viewBox="0 0 15 10"><path d="M.5 1h12v8H.5zM14 3.500v3"/><path fill="#fff" stroke="none" d="M2 2.500h5v5H2z"/></svg>
    <svg class="t5" viewBox="0 0 16 16"><circle cx="8" cy="8" r="7"/><path d="M1 8h10M8 1v9M2 4.500h12M2 11.500h6M8 1Q2 8 8 15M8 1q4 4 3.500 8"/><circle cx="12.500" cy="12.500" r="3" fill="#20291c"/><path d="M10.500 14.500l4-4"/></svg>
    <svg class="t6" viewBox="0 0 17 14"><path d="M1 5h2.500L7 1.500v11L3.500 9H1zM9 5q1.500 2 0 4M11.500 3q3 4 0 8M14 1q4 6 0 12"/></svg>
    <div class="clock"><span>15:53</span><span>18/12/2024</span></div>
    <svg class="t7" viewBox="0 0 17 16"><path d="M1 1h15v11h-4.500L9 14.500 6.500 12H1z"/></svg>
    <i class="peek"></i>
  </div>
</footer>
</body>
</html>
```
FILE: styles.css
```css
* { box-sizing: border-box; }
body { margin: 0; width: 1366px; height: 768px; overflow: hidden; display: flex; flex-direction: column; background: #f3f2f1; font-family: "Open Sans", "Noto Sans", sans-serif; font-size: 12px; color: #252423; }
h1, h2, h3, h4, h5, p, ul { margin: 0; padding: 0; }
svg { display: block; flex: none; overflow: visible; }
span, b { white-space: nowrap; }
.defs { position: absolute; width: 0; height: 0; }
.d { fill: none; stroke: #333; }
.w { fill: #fff; stroke: #333; }
.b { fill: #83beec; stroke: #0f6cbd; }
.bl { fill: none; stroke: #0f6cbd; }
.bw { fill: #fff; stroke: #0f6cbd; }
.g { fill: #c8c6c4; stroke: #777; }
.gw { fill: #fff; stroke: #777; }
.num { font: 600 8px "Open Sans", sans-serif; fill: #1f7fc8; }
text.big { font: 700 17px "Open Sans", sans-serif; fill: #1f7fc8; }
.big text.fx { font: italic 20px "Liberation Serif", serif; fill: #aaa; }

.titlebar { height: 34px; flex: none; background: #3b3a39; color: #fff; display: flex; align-items: center; }
.save { width: 18px; height: 18px; margin-left: 16px; fill: none; stroke: #fff; }
.undo { width: 16px; height: 16px; margin-left: 14px; fill: none; stroke: #7b7a79; stroke-width: 1.300; }
.redo { margin-left: 13px; }
.doc { margin: 6px 0 0 9px; width: 316px; letter-spacing: -.25px; font-size: 12px; }
.caret { border: 4px solid transparent; border-top: 5px solid #fff; border-bottom: 0; margin-left: 6px; }
.tsearch { width: 400px; height: 24px; margin-left: 175px; background: #d2d0ce; border-radius: 2px; color: #33685c; display: flex; align-items: center; font-size: 13px; }
.tsearch svg { width: 16px; height: 16px; margin: 0 12px 0 17px; color: #333; }
.signin { margin-left: 145px; width: 47px; letter-spacing: -.1px; }
.avatar { width: 20px; height: 20px; fill: none; stroke: #222; stroke-width: 1.500; }
.win { width: 100px; height: 12px; margin-left: 31px; fill: none; stroke: #fff; stroke-width: 1.200; }

.menu { height: 32px; flex: none; background: #fafafa; display: flex; font-size: 13px; line-height: 32px; }
.menu > span { height: 31px; }
.m1 { margin-left: 23px; width: 58px; letter-spacing: -.1px; }
.m2 { width: 38px; margin-right: 31px; font-weight: 700; letter-spacing: -.35px; border-bottom: 3px solid #117865; }
.m3 { width: 67px; letter-spacing: -.1px; }
.m4 { width: 90px; letter-spacing: -.1px; }
.m5 { width: 61px; }
.m6 { width: 88px; letter-spacing: .1px; }
.m7 { width: 60px; }
.share { margin: 4px 6px 0 auto; width: 84px; height: 24px; border: 0; border-radius: 4px; background: #117865; color: #fff; display: flex; align-items: center; padding: 0 0 0 7px; font: 500 12px "Open Sans", sans-serif; letter-spacing: -.2px; }
.share svg { width: 17px; height: 15px; fill: none; stroke: #fff; stroke-width: 1.200; margin-right: 7px; }
.share svg.sc { width: 9px; height: 9px; margin: 0 0 0 5px; }

.ribbon { height: 94px; flex: none; background: #fafafa; display: flex; padding: 4px 0 2px; box-shadow: 0 1px 5px rgba(0,0,0,.28); z-index: 2; position: relative; }
.group { height: 88px; border-right: 1px solid #d1d1d1; flex: none; }
.group p { text-align: center; font-size: 10px; line-height: 14px; height: 14px; margin-top: 1px; }
.tools { height: 75px; display: flex; padding-top: 6px; justify-content: center; }
.big { display: flex; flex-direction: column; align-items: center; flex: none; }
.big > svg { width: 30px; height: 30px; margin-bottom: 4px; }
.big b { font-weight: 400; line-height: 16px; height: 16px; letter-spacing: -.2px; display: flex; align-items: center; }
svg.cv { width: 9px; height: 9px; margin-left: 0; color: #333; }
.off { color: #c2c0be; }
.off svg.cv { color: #aaa; }
.gClip { width: 81px; }
.gData { width: 309px; }
.gQuery { width: 117px; }
.gInsert { width: 409px; }
.gCalc { width: 188px; }
.gSens { width: 74px; }
.gShare { width: 59px; }
.gCop { width: 60px; }
.stack { display: flex; flex-direction: column; gap: 8px; }
.stack span, .stack.mini svg { height: 16px; display: flex; align-items: center; line-height: 16px; letter-spacing: -.3px; }
.stack svg { width: 16px; height: 16px; }
.stack span svg { margin-right: 3px; }
.stack span svg.cv { width: 10px; height: 10px; margin: 2px 0 0 2px; }
.stack .lake { letter-spacing: -.4px; }
.mini { margin: -2px 0 0 4px; }
.gClip .big { width: 40px; margin-left: -6px; }
.gData .tools, .gQuery .tools, .gInsert .tools, .gCalc .tools { justify-content: flex-start; }
.getd { width: 40px; margin-left: 8px; }
.c1 { margin: -1px 0 0 5px; width: 133px; }
.c2 { margin-top: -1px; }
.c2 span svg { margin-right: 5px; }
.wT { width: 60px; margin-left: 6px; }
.wT b:first-of-type, .wR b { letter-spacing: -.5px; }
.wR { width: 44px; margin-left: -2px; }
.wN { width: 40px; margin-left: 8px; }
.gallery { margin: 1px 0 0 4px; width: 254px; height: 62px; border: 1px solid #8a8886; background: #fff; display: flex; }
.gal { width: 237px; border-right: 1px solid #8a8886; display: grid; grid-template-columns: repeat(9, 26px); grid-auto-rows: 29px; padding: 7px 0 0 6px; }
.gal svg { width: 16px; height: 16px; }
.more { flex: 1; display: flex; align-items: center; justify-content: center; padding-top: 6px; }
.wB { width: 40px; margin-left: 4px; }
.wM { width: 52px; margin-left: -1px; }
.wV { width: 72px; margin-left: 9px; }
.wE { width: 50px; margin-left: -1px; }
.wQ { width: 50px; margin-left: -1px; }
.wE b, .wQ b { letter-spacing: -.5px; }
.collapse { width: 10px; height: 10px; margin: 76px 0 0 55px; fill: none; stroke: #222; stroke-width: 1.600; }

.work { height: 543px; flex: none; display: flex; }
.rail { width: 41px; border-right: 1px solid #d8d6d4; display: flex; flex-direction: column; align-items: center; gap: 22px; padding: 11px 0 0 2px; background: linear-gradient(#117865, #117865) 0 0 / 3px 40px no-repeat; }
.rail svg { width: 18px; height: 18px; fill: none; stroke: #7a7876; }
.rail svg.act { stroke: #111; }
.rail text { font: 7px "Open Sans", sans-serif; fill: #555; stroke: none; transform: translateX(-1px); }
.center { width: 930px; display: flex; flex-direction: column; }
.upper { height: 508px; display: flex; }
.canvas { position: relative; width: 898px; background: #fff; border-right: 1px solid #a5a5a5; overflow: hidden; }
.page { position: absolute; left: 2px; top: -10px; width: 893px; height: 512px; border: 2px dotted #555; }
.card { position: absolute; background: #b2b2b2; border: 1px solid #3a3a3a; border-radius: 20px; text-align: center; }
.title { left: 89px; top: 13px; width: 671px; height: 56px; font-size: 22px; line-height: 51px; text-align: left; padding-left: 10px; letter-spacing: -.2px; }
.k1 { left: 8px; top: 85px; width: 272px; height: 165px; padding-top: 9px; }
.k2 { left: 283px; top: 85px; width: 254px; height: 165px; padding-top: 7px; }
.k3 { left: 542px; top: 85px; width: 250px; height: 165px; padding-top: 7px; }
.k4 { left: 13px; top: 284px; width: 263px; height: 162px; padding-top: 7px; }
.card h2 { font: 700 20px/29px "Liberation Sans", sans-serif; letter-spacing: .35px; color: #000; -webkit-text-stroke: .6px #000; transform: scaleX(1.17); white-space: nowrap; }
.k2 h2, .k3 h2, .k4 h2 { transform: scaleX(1.13); }
.card strong { display: block; font: 42px/46px "Liberation Serif", serif; letter-spacing: 2.800px; color: #000; -webkit-text-stroke: .7px #000; margin-top: 26px; padding-left: 1px; }
.k4 strong { margin-top: 39px; }
.slicer { position: absolute; left: 795px; top: 1px; width: 95px; text-align: center; }
.slicer h3 { font: 700 14px/21px "Liberation Sans", sans-serif; letter-spacing: .3px; color: #000; -webkit-text-stroke: .5px #000; transform: scaleX(1.17); white-space: nowrap; }
.slicer h3 span { margin-right: 7px; }
.slicer ul { list-style: none; margin: 2px 0 0; width: 94px; border: 1px solid #c4c4c4; }
.slicer li { height: 60px; border-bottom: 2px solid #ccc; padding: 9px 0 0 8px; }
.slicer li:last-child { border: 0; height: 58px; }
.slicer li span { display: block; width: 77px; height: 43px; border-left: 2px solid #333; box-shadow: 2px 2px 3px rgba(0,0,0,.3); text-align: left; padding-left: 7px; font: 500 15px/42px Roboto, sans-serif; color: #111; }
.chart { top: 290px; height: 156px; width: 272px; text-align: left; }
.v1 { left: 283px; }
.v2 { left: 571px; }
.chart h4 { font: 700 17px/25px "Liberation Sans", sans-serif; letter-spacing: .1px; color: #000; -webkit-text-stroke: .5px #000; height: 59px; padding: 6px 0 0 8.500px; white-space: nowrap; transform: scaleX(1.17); transform-origin: 0 0; }
.chart svg { width: 270px; height: 96px; border-top: 2px solid #888; }
.chart text { font-family: "Noto Sans", sans-serif; fill: #111; }
.lb text { font-weight: 600; font-size: 14px; }
.lg text { font-weight: 600; font-size: 15px; }
.chart .ax text { font-size: 9px; text-anchor: end; }
.vl text { font-size: 8.500px; font-weight: 600; text-anchor: middle; }
.cl text { font-size: 9.500px; font-weight: 500; text-anchor: end; }
.chart text.yl { font-size: 8px; font-weight: 600; }

.filters { width: 32px; background: #fff; display: flex; flex-direction: column; align-items: center; border-right: 1px solid #e1dfdd; }
.filters .dl { width: 14px; height: 14px; transform: scaleX(-1); margin-top: 12px; color: #333; }
.filters .fn { width: 12px; height: 12px; margin: 15px 0 9px 4px; fill: none; stroke: #333; stroke-width: 1.200; }
.filters span { writing-mode: vertical-rl; font-size: 14px; line-height: 20px; letter-spacing: .4px; -webkit-text-stroke: .2px #252423; }
.pages { height: 35px; display: flex; border-bottom: 1px solid #e1dfdd; background: linear-gradient(#117865, #117865) 10px 28px / 24px 3px no-repeat; }
.desk { width: 20px; height: 16px; margin: 6px 0 0 11px; fill: none; stroke: #666; stroke-width: 1.400; }
.desk + .phone { width: 13px; height: 21px; margin: 5px 0 0 28px; fill: none; stroke: #666; stroke-width: 1.300; }
.pl, .pr { border: 4px solid transparent; height: 0; margin-top: 14px; }
.pl { border-right: 5px solid #c8c6c4; border-left: 0; margin-left: 21px; }
.pr { border-left: 5px solid #c8c6c4; border-right: 0; margin-left: 17px; }
.tab { width: 76px; background: #fff; border-right: 1px solid #c8c6c4; text-align: center; line-height: 37px; letter-spacing: -.3px; position: relative; color: #111; }
.tab.cur { margin-left: 7px; border-left: 1px solid #a0a0a0; border-bottom: 4px solid #117865; width: 77px; }
.tab em { position: absolute; right: 5px; top: 2px; font-style: normal; font-size: 10px; line-height: 14px; }
.add { width: 39px; background: #117865; color: #fff; font: 800 20px/32px "Open Sans", sans-serif; text-align: center; }

.pane header { display: flex; height: 38px; align-items: center; }
.pane h5 { font-size: 15px; font-weight: 600; letter-spacing: -.2px; line-height: 20px; }
.pane .dt { width: 16px; height: 16px; margin-left: auto; }
.pane .dd { width: 13px; height: 13px; margin-left: 8px; color: #666; }
.build { width: 182px; padding: 0 8px; border-left: 1px solid #e1dfdd; border-right: 1px solid #e1dfdd; }
.build label { display: block; height: 19px; line-height: 16px; letter-spacing: -.25px; }
.vis { height: 188px; width: 164px; border: 1px solid #8a8886; border-radius: 2px; background: #fff; display: grid; grid-template-columns: repeat(6, 26px); grid-auto-rows: 26px; padding: 6px 0 0 7px; }
.vis svg { width: 18px; height: 18px; }
.vis svg.sm { width: 16px; margin-left: 1px; }
.build .dlab { margin-top: 9px; }
.drop { width: 164px; height: 40px; border: 1px dashed #666; padding: 4px; }
.drop button { width: 154px; height: 30px; border: 1px solid #666; border-radius: 2px; background: #fff; font: 12px "Open Sans", sans-serif; color: #111; }
.data { width: 180px; padding: 0 8px 0 4px; }
.data h5 { margin-left: 4px; }
.dsearch { height: 24px; margin-top: 7px; width: 172px; background: #fff; border: 1px solid #c8c6c4; border-bottom: 1px solid #555; border-radius: 4px; display: flex; align-items: center; font-size: 13px; color: #707070; letter-spacing: -.1px; }
.dsearch svg { width: 16px; height: 16px; margin: 0 5px 0 12px; fill: none; stroke: #555; }
.row { height: 24px; display: flex; align-items: center; padding-left: 11px; letter-spacing: -.25px; }
.dsearch + .row { margin-top: 9px; }
.row svg { fill: none; stroke: #333; }
.row .ch { width: 7px; height: 12px; stroke: #666; }
.row .tb { width: 12px; height: 12px; margin: 0 6px 0 7px; stroke-width: 1.200; }
.rrail { width: 33px; border-left: 1px solid #e1dfdd; background: #faf9f8; display: flex; flex-direction: column; }
.rrail > div { height: 32px; display: flex; align-items: center; justify-content: center; }
.rrail .sel { background: #e1dfdd; border: 1px solid #555; }
.rrail svg { width: 20px; height: 20px; }
.plus svg { stroke: #222; stroke-width: 1.500; }
.rrail > .plus { height: 31px; }
.rrail > .gear { margin-top: auto; border-top: 1px solid #e1dfdd; }
.gear svg { fill: none; stroke: #333; stroke-width: 1.300; }

.status { height: 24px; flex: none; border-top: 1px solid #e1dfdd; display: flex; align-items: center; color: #444; padding-top: 1px; }
.pn { margin-left: 4px; width: 1150px; letter-spacing: -.25px; }
.minus { width: 9px; font-weight: 700; }
.track { width: 100px; height: 11px; display: flex; align-items: center; background: linear-gradient(#666, #666) 0 5px / 100px 1px no-repeat; }
.thumb { width: 4px; height: 11px; background: #555; margin-left: 31px; }
.tick { width: 1px; height: 5px; background: #555; margin-left: 15px; }
.pls { width: 21px; margin-left: 6px; font-size: 13px; }
.pct { width: 42px; font-size: 11.500px; color: #666; }
.status svg { width: 16px; height: 12px; fill: none; stroke: #555; }

.taskbar { height: 41px; flex: none; border-top: 1px solid #000; background: linear-gradient(90deg, #27301f, #2b3322 50%, #1e281b); display: flex; color: #fff; }
.start { width: 48px; display: flex; align-items: center; justify-content: center; }
.start svg { width: 16px; height: 16px; }
.wsearch { width: 288px; background: #f2f2f2; border: 1px solid #bbb; color: #333; display: flex; align-items: center; font-size: 14.500px; letter-spacing: -.3px; }
.wsearch svg { width: 16px; height: 16px; margin: 0 12px 0 11px; }
.app { width: 49px; display: flex; align-items: center; justify-content: center; }
.app svg { width: 24px; height: 24px; }
.app .tv { width: 17px; height: 17px; fill: none; stroke: #fff; }
.a2 { width: 51px; }
.pbi { background: #545b4d; border-bottom: 3px solid #76b9ed; width: 48px; }
.app.pbi svg { margin-top: 2px; }
.tray { margin-left: auto; display: flex; align-items: center; }
.tray svg { fill: none; stroke: #fff; stroke-width: 1.100; }
.t1 { width: 24px; height: 16px; margin-right: 26px; }
.t2 { width: 12px; height: 8px; margin-right: 13px; }
.t3 { width: 12px; height: 16px; margin-right: 11px; }
.t4 { width: 15px; height: 10px; margin-right: 8px; }
.t5 { width: 16px; height: 16px; margin-right: 8px; }
.t6 { width: 16px; height: 14px; margin-right: 8px; }
.clock { width: 62px; display: flex; flex-direction: column; align-items: center; line-height: 18px; letter-spacing: -.4px; }
.t7 { width: 16px; height: 16px; margin: 0 21px 0 16px; }
.peek { width: 1px; height: 40px; background: #777; margin-right: 3px; }
```
